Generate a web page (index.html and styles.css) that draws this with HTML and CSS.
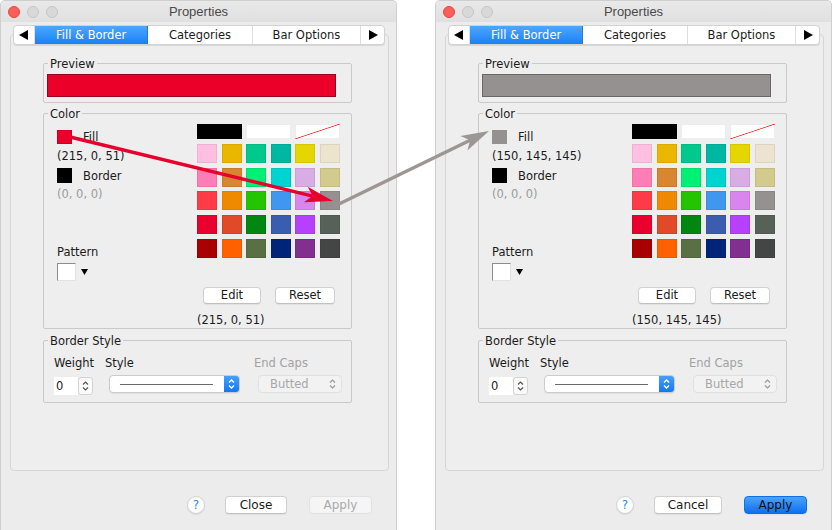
FILE: index.html
```html
<!DOCTYPE html>
<html>
<head>
<meta charset="utf-8">
<title>Properties</title>
<link rel="stylesheet" href="styles.css">
</head>
<body>
<div class="desktop">
  <div class="window">
    <div class="titlebar">
      <div class="lights"><span class="light red"></span><span class="light"></span><span class="light"></span></div>
      <div class="title">Properties</div>
      <div></div>
    </div>
    <div class="tabs">
      <div class="tab arrow-tab"><svg width="9" height="10" viewBox="0 0 9 10"><polygon points="9,0 9,10 0,5" fill="#000"/></svg></div>
      <div class="tab tab-fill selected">Fill &amp; Border</div>
      <div class="tab tab-cat">Categories</div>
      <div class="tab tab-bar">Bar Options</div>
      <div class="tab arrow-tab right"><svg width="9" height="10" viewBox="0 0 9 10"><polygon points="0,0 0,10 9,5" fill="#000"/></svg></div>
    </div>
    <div class="panel">
      <fieldset class="group">
        <legend>Preview</legend>
        <div class="preview-body"><div class="preview red-swatch"></div></div>
      </fieldset>
      <fieldset class="group group-color">
        <legend>Color</legend>
        <div class="color-body">
          <div class="color-left">
            <div class="swatch-row"><span class="swatch fill-red"></span><span>Fill</span></div>
            <div class="value">(215, 0, 51)</div>
            <div class="swatch-row row-border"><span class="swatch black"></span><span>Border</span></div>
            <div class="value muted">(0, 0, 0)</div>
            <div class="pattern-label">Pattern</div>
            <div class="pattern-row"><span class="pattern-box"></span><svg width="7" height="6" viewBox="0 0 7 6"><polygon points="0,0 7,0 3.5,6" fill="#000"/></svg></div>
          </div>
          <div class="color-right">
            <div class="palette">
              <span class="cell wide c-black"></span><span class="cell wide c-white"></span><span class="cell wide c-none"></span>
              <span class="cell" style="background:#ffbfe1"></span><span class="cell" style="background:#e9b700"></span><span class="cell" style="background:#00c98b"></span><span class="cell" style="background:#00b7a1"></span><span class="cell" style="background:#e6d600"></span><span class="cell" style="background:#ede4cf"></span>
              <span class="cell" style="background:#ff7eb6"></span><span class="cell" style="background:#d8862f"></span><span class="cell" style="background:#00f075"></span><span class="cell" style="background:#00d4d0"></span><span class="cell" style="background:#d8ade6"></span><span class="cell" style="background:#d3cb8d"></span>
              <span class="cell" style="background:#ff3b48"></span><span class="cell" style="background:#ef8a00"></span><span class="cell" style="background:#25c400"></span><span class="cell" style="background:#3f97ef"></span><span class="cell" style="background:#d885ee"></span><span class="cell" style="background:#969191"></span>
              <span class="cell" style="background:#e9002e"></span><span class="cell" style="background:#e04a28"></span><span class="cell" style="background:#008611"></span><span class="cell" style="background:#3a5db0"></span><span class="cell" style="background:#b640fb"></span><span class="cell" style="background:#586159"></span>
              <span class="cell" style="background:#a80000"></span><span class="cell" style="background:#ff6100"></span><span class="cell" style="background:#587043"></span><span class="cell" style="background:#00247a"></span><span class="cell" style="background:#81308f"></span><span class="cell" style="background:#444545"></span>
            </div>
            <div class="edit-row"><button class="btn btn-edit">Edit</button><button class="btn btn-reset">Reset</button></div>
            <div class="value bottom-value">(215, 0, 51)</div>
          </div>
        </div>
      </fieldset>
      <fieldset class="group">
        <legend>Border Style</legend>
        <div class="border-body">
          <div class="label">Weight</div>
          <div class="label">Style</div>
          <div class="label muted">End Caps</div>
          <div class="spinner"><span class="spin-field">0</span><span class="stepper"><svg width="7" height="12" viewBox="0 0 7 12"><path d="M1 4.5 L3.5 2 L6 4.5 M1 7.5 L3.5 10 L6 7.5" fill="none" stroke="#555" stroke-width="1.2"/></svg></span></div>
          <div class="combo"><span class="combo-line"><span class="line"></span></span><span class="combo-arrow"><svg width="7" height="12" viewBox="0 0 7 12"><path d="M1 4.5 L3.5 2 L6 4.5 M1 7.5 L3.5 10 L6 7.5" fill="none" stroke="#fff" stroke-width="1.3"/></svg></span></div>
          <div class="combo disabled"><span class="combo-text">Butted</span><svg width="7" height="12" viewBox="0 0 7 12"><path d="M1 4.5 L3.5 2 L6 4.5 M1 7.5 L3.5 10 L6 7.5" fill="none" stroke="#9a9a9a" stroke-width="1.2"/></svg></div>
        </div>
      </fieldset>
    </div>
    <div class="footer">
      <span class="help">?</span>
      <button class="btn btn-foot">Close</button>
      <button class="btn btn-foot btn-apply disabled">Apply</button>
    </div>
  </div>

  <div class="window">
    <div class="titlebar">
      <div class="lights"><span class="light red"></span><span class="light"></span><span class="light"></span></div>
      <div class="title">Properties</div>
      <div></div>
    </div>
    <div class="tabs">
      <div class="tab arrow-tab"><svg width="9" height="10" viewBox="0 0 9 10"><polygon points="9,0 9,10 0,5" fill="#000"/></svg></div>
      <div class="tab tab-fill selected">Fill &amp; Border</div>
      <div class="tab tab-cat">Categories</div>
      <div class="tab tab-bar">Bar Options</div>
      <div class="tab arrow-tab right"><svg width="9" height="10" viewBox="0 0 9 10"><polygon points="0,0 0,10 9,5" fill="#000"/></svg></div>
    </div>
    <div class="panel">
      <fieldset class="group">
        <legend>Preview</legend>
        <div class="preview-body"><div class="preview gray-swatch"></div></div>
      </fieldset>
      <fieldset class="group group-color">
        <legend>Color</legend>
        <div class="color-body">
          <div class="color-left">
            <div class="swatch-row"><span class="swatch fill-gray"></span><span>Fill</span></div>
            <div class="value">(150, 145, 145)</div>
            <div class="swatch-row row-border"><span class="swatch black"></span><span>Border</span></div>
            <div class="value muted">(0, 0, 0)</div>
            <div class="pattern-label">Pattern</div>
            <div class="pattern-row"><span class="pattern-box"></span><svg width="7" height="6" viewBox="0 0 7 6"><polygon points="0,0 7,0 3.5,6" fill="#000"/></svg></div>
          </div>
          <div class="color-right">
            <div class="palette">
              <span class="cell wide c-black"></span><span class="cell wide c-white"></span><span class="cell wide c-none"></span>
              <span class="cell" style="background:#ffbfe1"></span><span class="cell" style="background:#e9b700"></span><span class="cell" style="background:#00c98b"></span><span class="cell" style="background:#00b7a1"></span><span class="cell" style="background:#e6d600"></span><span class="cell" style="background:#ede4cf"></span>
              <span class="cell" style="background:#ff7eb6"></span><span class="cell" style="background:#d8862f"></span><span class="cell" style="background:#00f075"></span><span class="cell" style="background:#00d4d0"></span><span class="cell" style="background:#d8ade6"></span><span class="cell" style="background:#d3cb8d"></span>
              <span class="cell" style="background:#ff3b48"></span><span class="cell" style="background:#ef8a00"></span><span class="cell" style="background:#25c400"></span><span class="cell" style="background:#3f97ef"></span><span class="cell" style="background:#d885ee"></span><span class="cell" style="background:#969191"></span>
              <span class="cell" style="background:#e9002e"></span><span class="cell" style="background:#e04a28"></span><span class="cell" style="background:#008611"></span><span class="cell" style="background:#3a5db0"></span><span class="cell" style="background:#b640fb"></span><span class="cell" style="background:#586159"></span>
              <span class="cell" style="background:#a80000"></span><span class="cell" style="background:#ff6100"></span><span class="cell" style="background:#587043"></span><span class="cell" style="background:#00247a"></span><span class="cell" style="background:#81308f"></span><span class="cell" style="background:#444545"></span>
            </div>
            <div class="edit-row"><button class="btn btn-edit">Edit</button><button class="btn btn-reset">Reset</button></div>
            <div class="value bottom-value">(150, 145, 145)</div>
          </div>
        </div>
      </fieldset>
      <fieldset class="group">
        <legend>Border Style</legend>
        <div class="border-body">
          <div class="label">Weight</div>
          <div class="label">Style</div>
          <div class="label muted">End Caps</div>
          <div class="spinner"><span class="spin-field">0</span><span class="stepper"><svg width="7" height="12" viewBox="0 0 7 12"><path d="M1 4.5 L3.5 2 L6 4.5 M1 7.5 L3.5 10 L6 7.5" fill="none" stroke="#555" stroke-width="1.2"/></svg></span></div>
          <div class="combo"><span class="combo-line"><span class="line"></span></span><span class="combo-arrow"><svg width="7" height="12" viewBox="0 0 7 12"><path d="M1 4.5 L3.5 2 L6 4.5 M1 7.5 L3.5 10 L6 7.5" fill="none" stroke="#fff" stroke-width="1.3"/></svg></span></div>
          <div class="combo disabled"><span class="combo-text">Butted</span><svg width="7" height="12" viewBox="0 0 7 12"><path d="M1 4.5 L3.5 2 L6 4.5 M1 7.5 L3.5 10 L6 7.5" fill="none" stroke="#9a9a9a" stroke-width="1.2"/></svg></div>
        </div>
      </fieldset>
    </div>
    <div class="footer">
      <span class="help">?</span>
      <button class="btn btn-foot btn-cancel">Cancel</button>
      <button class="btn btn-foot btn-apply primary">Apply</button>
    </div>
  </div>
</div>

<svg class="arrows" width="832" height="530" viewBox="0 0 832 530">
  <line x1="66" y1="136" x2="312.6" y2="196.1" stroke="#e8002d" stroke-width="3.5"/>
  <polygon points="333,201 307.7,186.7 312.6,196.1 303.9,202.3" fill="#e8002d"/>
  <line x1="339" y1="204" x2="470.1" y2="140.2" stroke="#9c9696" stroke-width="3.5"/>
  <polygon points="489,131 460.4,136.1 470.1,140.2 467.4,150.5" fill="#9c9696"/>
</svg>
</body>
</html>
```
FILE: styles.css
```css
* { box-sizing: border-box; }
html, body { margin: 0; padding: 0; }
body {
  width: 832px;
  height: 530px;
  overflow: hidden;
  position: relative;
  background: #ffffff;
  font-family: "DejaVu Sans", "Liberation Sans", sans-serif;
  font-size: 11.5px;
  color: #1b1b1b;
}
.desktop {
  display: flex;
  justify-content: space-between;
  height: 530px;
}
.window {
  width: 397px;
  height: 530px;
  background: #ececec;
  border: 1px solid #cfcfcf;
  border-bottom: none;
  border-radius: 5px 5px 0 0;
  display: flex;
  flex-direction: column;
  overflow: hidden;
}
.titlebar {
  height: 21px;
  flex: none;
  display: grid;
  grid-template-columns: 1fr auto 1fr;
  align-items: center;
  background: linear-gradient(#e9e9e9, #e0e0e0);
}
.lights { display: flex; gap: 7px; padding-left: 7px; }
.light {
  width: 12px; height: 12px; border-radius: 50%;
  background: #d8d8d8;
  border: 1px solid #c6c6c6;
}
.light.red { background: #fc5f58; border-color: #e14640; }
.title {
  font-family: "Liberation Sans", Arial, sans-serif;
  font-size: 13px;
  color: #4a4a4a;
}
.tabs {
  position: relative;
  z-index: 1;
  display: flex;
  width: 372px;
  height: 20px;
  margin: 3px 0 0 12px;
  background: #fff;
  border: 1px solid #d2d2d2;
  border-radius: 4px;
  box-shadow: 0 1px 1px rgba(0,0,0,0.10);
  overflow: hidden;
  flex: none;
}
.tab {
  display: flex; align-items: center; justify-content: center;
  border-right: 1px solid #dedede;
  color: #1b1b1b;
  white-space: nowrap;
}
.arrow-tab { width: 21px; justify-content: flex-start; padding-left: 5px; }
.arrow-tab.right { width: 23px; border-right: none; padding-left: 8px; }
.tab-fill { width: 114px; }
.tab-cat { width: 105px; }
.tab-bar { width: 109px; }
.tab.selected {
  background: linear-gradient(#4ea7ff, #1b80f6);
  color: #fff;
  border-right-color: #1f7ae8;
}
.panel {
  flex: none;
  margin: -11px 0 0 9px;
  width: 379px;
  height: 437px;
  padding: 21.5px 0 0 32px;
  background: #eeeeee;
  border: 1px solid #d6d6d6;
  border-radius: 4px;
}
.group {
  margin: 0;
  padding: 0;
  width: 309px;
  min-width: 0;
  border: 1px solid #c9c9c9;
  border-radius: 2px;
}
.group + .group { margin-top: 3.5px; }
.group-color + .group { margin-top: 4.5px; }
.group legend {
  padding: 0 2px;
  margin-left: 4px;
  line-height: 14px;
  color: #1b1b1b;
}
.preview-body {
  padding: 3.5px 15px 5px 3px;
  display: flex;
}
.preview { flex: 1; height: 23px; }
.red-swatch { background: #ea0029; border: 1px solid #8f0a20; }
.gray-swatch { background: #969191; border: 1px solid #6b6767; }

.color-body {
  display: flex;
  height: 207.5px;
  padding-left: 13px;
}
.color-left { width: 140px; padding-top: 9.5px; line-height: 14px; }
.swatch-row { display: flex; align-items: center; gap: 11px; height: 14px; }
.swatch { width: 15px; height: 14px; display: block; }
.row-border { margin-top: 5px; height: 15px; }
.row-border .swatch { height: 15px; }
.fill-red { background: #ea0029; box-shadow: inset 0 0 0 1px rgba(140,0,20,0.35); }
.fill-gray { background: #969191; }
.black { background: #000; }
.value { margin-top: 5px; line-height: 14px; }
.value.muted { margin-top: 4px; color: #9b9b9b; }
.pattern-label { margin-top: 44px; }
.pattern-row { margin-top: 4px; display: flex; align-items: center; gap: 5px; }
.pattern-box {
  width: 19px; height: 18px; background: #fff;
  border-top: 1px solid #8c8c8c; border-left: 1px solid #8c8c8c;
  border-right: 1px solid #e2e2e2; border-bottom: 1px solid #e2e2e2;
}
.color-right { padding-top: 3.5px; }
.palette {
  display: grid;
  grid-template-columns: repeat(6, 20px);
  grid-template-rows: 15px repeat(5, 19px);
  column-gap: 4.6px;
  row-gap: 4.8px;
}
.cell { display: block; box-shadow: inset 0 0 0 1px rgba(0,0,0,0.07); }
.cell.wide { grid-column: span 2; }
.c-black { background: #000; }
.c-white { background: #fff; }
.c-none {
  background: linear-gradient(to bottom right, #fff calc(50% - 0.8px), #ff3434 50%, #fff calc(50% + 0.8px));
}
.edit-row { display: flex; gap: 14px; margin: 29px 0 0 6px; }
.btn {
  font-family: inherit;
  font-size: 11.5px;
  height: 17px;
  padding: 0;
  background: #fff;
  color: #1b1b1b;
  border: 1px solid #d1d1d1;
  border-bottom-color: #c0c0c0;
  border-radius: 4px;
  box-shadow: 0 1px 1px rgba(0,0,0,0.06);
  line-height: 15px;
}
.btn-edit { width: 58px; }
.btn-reset { width: 60px; }
.bottom-value { margin-top: 9px; }

.border-body {
  display: grid;
  grid-template-columns: 51px 149px 1fr;
  grid-template-rows: 14px auto;
  row-gap: 5px;
  height: 54.5px;
  padding: 8.5px 0 0 10px;
  align-items: start;
}
.label { line-height: 14px; }
.label.muted { color: #a2a2a2; }
.spinner { display: flex; height: 18px; margin-top: 2px; }
.spin-field {
  width: 24px; height: 18px; background: #fff;
  padding-left: 2px; line-height: 18px;
}
.stepper {
  width: 15px; height: 18px;
  display: flex; align-items: center; justify-content: center;
  background: #fafafa;
  border: 1px solid #d3d3d3;
  border-radius: 3px;
}
.combo {
  display: flex; align-items: center;
  margin-left: 4px;
  width: 131px; height: 18px;
  background: #fff;
  border: 1px solid #cbcbcb;
  border-radius: 4px;
  box-shadow: 0 1px 1px rgba(0,0,0,0.06);
  overflow: hidden;
}
.combo-line { flex: 1; padding: 0 11px 0 10px; display: flex; align-items: center; }
.line { display: block; height: 1px; width: 100%; background: #6a6a6a; }
.combo-arrow {
  width: 15px; height: 100%;
  display: flex; align-items: center; justify-content: center;
  background: linear-gradient(#45a0fd, #1577f1);
}
.combo.disabled {
  width: 84px;
  background: #f2f2f2;
  border-color: #e0e0e0;
  box-shadow: none;
  justify-content: space-between;
  padding: 0 5px 0 11px;
}
.combo-text { color: #a6a6a6; }

.footer {
  display: flex;
  align-items: center;
  justify-content: flex-end;
  margin-top: 25px;
  padding-right: 24px;
  gap: 20px;
}
.help {
  width: 18px; height: 18px; border-radius: 50%;
  background: #fff;
  border: 1px solid #d2d2d2;
  box-shadow: 0 1px 1px rgba(0,0,0,0.08);
  color: #2c8af7;
  font-size: 12px;
  display: flex; align-items: center; justify-content: center;
}
.btn-foot { width: 62px; height: 18px; font-size: 12px; line-height: 16px; }
.btn-cancel { width: 68px; }
.btn-apply { width: 63px; margin-left: 2px; }
.btn.disabled { background: #f5f5f5; border-color: #e1e1e1; color: #a9a9a9; box-shadow: none; }
.btn.primary {
  background: linear-gradient(#4aa3fd, #0f6ff2);
  border-color: #0f6fe6;
  color: #101010;
}
.arrows {
  position: absolute;
  left: 0; top: 0;
  pointer-events: none;
}
```
